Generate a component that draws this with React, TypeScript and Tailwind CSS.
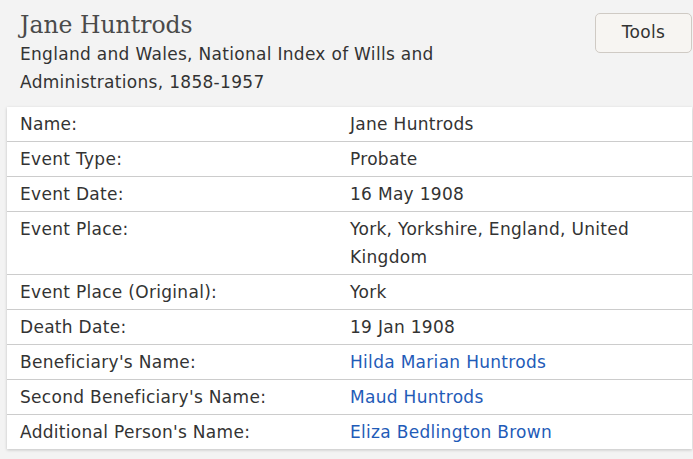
import React from "react";

const rows: { label: string; value: string; link?: boolean }[] = [
  { label: "Name:", value: "Jane Huntrods" },
  { label: "Event Type:", value: "Probate" },
  { label: "Event Date:", value: "16 May 1908" },
  { label: "Event Place:", value: "York, Yorkshire, England, United Kingdom" },
  { label: "Event Place (Original):", value: "York" },
  { label: "Death Date:", value: "19 Jan 1908" },
  { label: "Beneficiary's Name:", value: "Hilda Marian Huntrods", link: true },
  { label: "Second Beneficiary's Name:", value: "Maud Huntrods", link: true },
  { label: "Additional Person's Name:", value: "Eliza Bedlington Brown", link: true },
];

export default function App() {
  return (
    <div
      className="h-[459px] w-[693px] overflow-hidden bg-[#f3f3f3] text-[17px] tracking-[0.3px] text-[#333]"
      style={{ fontFamily: "Verdana, 'DejaVu Sans', sans-serif" }}
    >
      <div className="flex items-start justify-between pl-[20px] pr-[1px] pt-[10px]">
        <div>
          <h1
            className="text-[23.5px] leading-[30px] tracking-normal text-[#4a4a4a]"
            style={{ fontFamily: "'DejaVu Serif', serif" }}
          >
            Jane Huntrods
          </h1>
          <div className="w-[450px] leading-[28px] text-[#333]">
            England and Wales, National Index of Wills and Administrations, 1858-1957
          </div>
        </div>
        <button className="mt-[3px] h-[40px] w-[97px] rounded-[5px] border border-[#cfcac4] bg-[#f7f5f2] text-[#333]">
          Tools
        </button>
      </div>

      <div className="ml-[7px] mr-[1px] mt-[11px] bg-white shadow-[0_1px_3px_rgba(0,0,0,0.2)]">
        {rows.map((r, i) => (
          <div
            key={r.label}
            className={`grid grid-cols-[343px_1fr] py-[3px] leading-[28px] ${
              i < rows.length - 1 ? "border-b border-[#cccccc]" : ""
            }`}
          >
            <div className="pl-[13px]">{r.label}</div>
            <div className={`pr-[40px] ${r.link ? "text-[#1f5bb8]" : "text-[#333]"}`}>{r.value}</div>
          </div>
        ))}
      </div>
    </div>
  );
}
